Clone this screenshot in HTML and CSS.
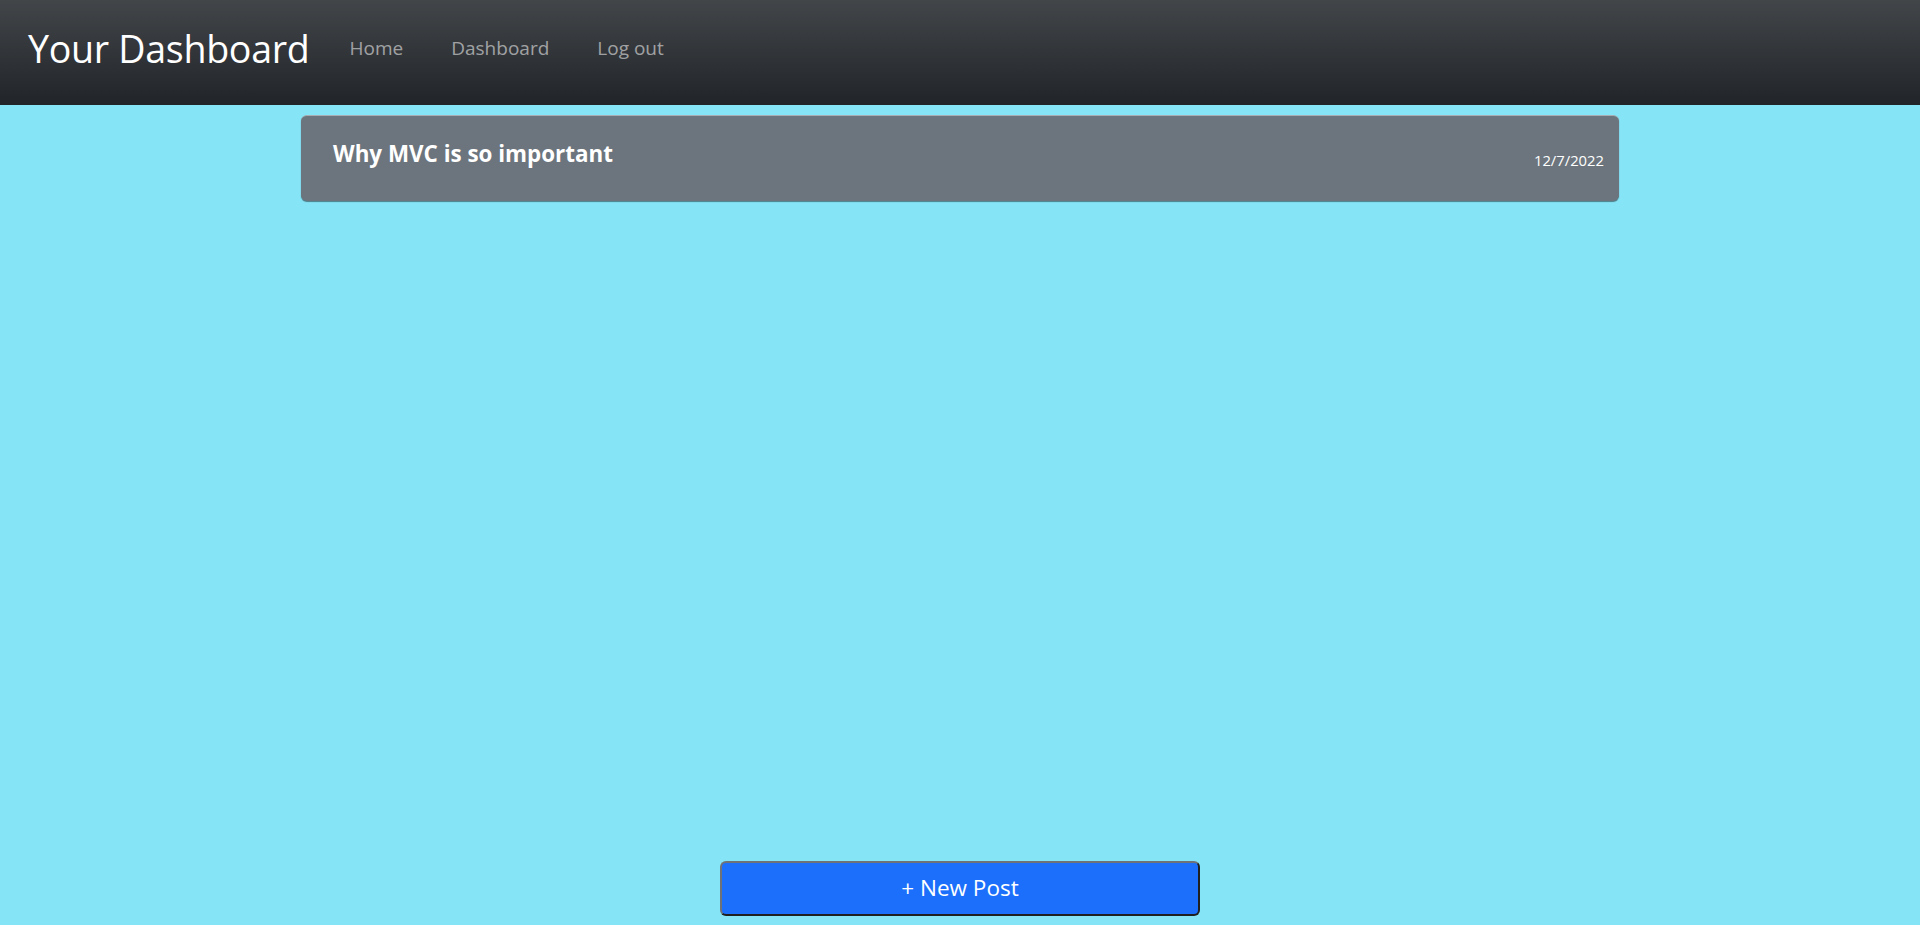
FILE: index.html
```html
<!DOCTYPE html>
<html lang="en">
<head>
<meta charset="utf-8">
<title>Your Dashboard</title>
<link rel="stylesheet" href="styles.css">
</head>
<body>
<header class="navbar">
  <a class="brand" href="#">Your Dashboard</a>
  <nav class="nav-links">
    <a href="#">Home</a>
    <a href="#">Dashboard</a>
    <a href="#">Log out</a>
  </nav>
</header>
<main class="content">
  <article class="post-card">
    <h2 class="post-title">Why MVC is so important</h2>
    <span class="post-date">12/7/2022</span>
  </article>
</main>
<footer class="actions">
  <button class="new-post" type="button">+ New Post</button>
</footer>
</body>
</html>
```
FILE: styles.css
```css
* { box-sizing: border-box; }
html, body { height: 100%; }
body {
  margin: 0;
  font-family: "Open Sans", "Noto Sans", "Liberation Sans", sans-serif;
  background: #86e4f7;
  display: flex;
  flex-direction: column;
  min-height: 100vh;
}
.navbar {
  height: 105px;
  display: flex;
  align-items: center;
  padding: 0 0 8px 28px;
  background: #212529 linear-gradient(180deg, rgba(255,255,255,.15), rgba(255,255,255,0));
}
.brand {
  color: #fff;
  text-decoration: none;
  font-size: 37.6px;
  font-weight: 400;
  letter-spacing: -0.3px;
  margin-right: 40px;
}
.nav-links { display: flex; gap: 48px; margin-bottom: 1px; }
.nav-links a {
  color: rgba(255,255,255,.55);
  text-decoration: none;
  font-size: 19px;
}
.content {
  flex: 1;
  width: 1318px;
  margin: 10px auto 0;
}
.post-card {
  height: 86px;
  background: #6c757d;
  border-radius: 6px;
  border-top: 1px solid #a7adb2;
  box-shadow: 0 1px 1px rgba(0,0,0,.45);
  display: flex;
  align-items: center;
  justify-content: space-between;
  padding: 0 15px 0 32px;
  color: #fff;
}
.post-title {
  margin: 0 0 10px;
  font-size: 22.4px;
  font-weight: 700;
}
.post-date { font-size: 14.8px; margin-top: 2px; }
.actions {
  display: flex;
  justify-content: center;
  padding-bottom: 9px;
}
.new-post {
  width: 480px;
  height: 55px;
  background: #1b6ffb;
  color: #fff;
  font-family: inherit;
  font-size: 22.5px;
  border-radius: 6px;
  border: 2px solid;
  border-color: #6f7276 #1f1f1f #1f1f1f #6f7276;
  padding: 0 0 2px;
}
```
